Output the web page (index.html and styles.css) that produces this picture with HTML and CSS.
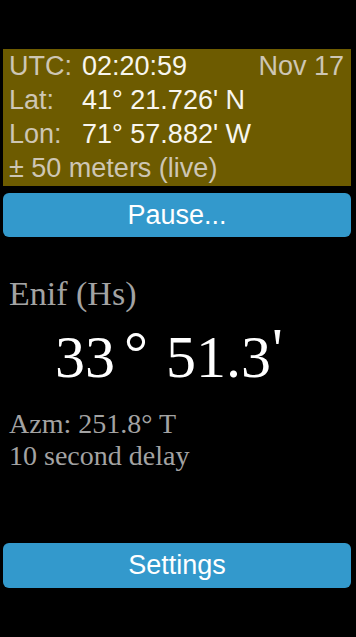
FILE: index.html
```html
<!DOCTYPE html>
<html lang="en">

<head>
    <meta charset="UTF-8">
    <title>Sight</title>
    <link rel="stylesheet" href="styles.css">
</head>

<body>
    <div class="fix-box">
        <div class="fix-row">
            <span class="label">UTC:</span>
            <span class="value">02:20:59</span>
            <span class="date">Nov 17</span>
        </div>
        <div class="fix-row">
            <span class="label">Lat:</span>
            <span class="value">41° 21.726' N</span>
        </div>
        <div class="fix-row">
            <span class="label">Lon:</span>
            <span class="value">71° 57.882' W</span>
        </div>
        <div class="fix-row">
            <span class="accuracy">± 50 meters (live)</span>
        </div>
    </div>

    <button class="btn btn-pause">Pause...</button>

    <div class="sight">
        <p class="body-name">Enif (Hs)</p>
        <p class="altitude">33<span class="deg">°</span>51.3<span class="min">'</span></p>
        <p class="info">Azm: 251.8° T</p>
        <p class="info">10 second delay</p>
    </div>

    <button class="btn btn-settings">Settings</button>
</body>

</html>
```

FILE: styles.css
```css
/* Basic page styles */
body {
    margin: 0;
    padding: 49px 5px 0 3px;
    background-color: #000;
    font-family: "Liberation Sans", Arial, sans-serif;
}

p {
    margin: 0;
}

/* GPS fix box */
.fix-box {
    background-color: #6d5b00;
    padding: 0 7px 1px 6px;
    font-size: 27px;
    line-height: 34px;
}

.fix-row {
    display: flex;
    white-space: nowrap;
}

.label {
    width: 73px;
    color: #cdc6b4;
}

.value {
    color: #f8f6ee;
}

.date {
    margin-left: auto;
    color: #cdc6b4;
}

.accuracy {
    color: #cdc6b4;
}

/* Buttons */
.btn {
    display: block;
    width: 100%;
    border: none;
    border-radius: 6px;
    background-color: #3399cc;
    color: #fff;
    font-family: "Liberation Sans", Arial, sans-serif;
    font-size: 27px;
    padding: 0;
}

.btn-pause {
    margin-top: 7px;
    height: 44px;
}

.btn-settings {
    margin-top: 71px;
    height: 45px;
}

/* Sight readout */
.sight {
    font-family: "Liberation Serif", "Times New Roman", serif;
    padding-left: 6px;
}

.body-name {
    margin-top: 37px;
    font-size: 34px;
    line-height: 40px;
    color: #a3a3a3;
}

.altitude {
    margin-top: 8px;
    padding-left: 46px;
    font-size: 60px;
    line-height: 70px;
    color: #fff;
}

.altitude .deg {
    margin: 0 18px 0 9px;
    line-height: 0;
    vertical-align: 4px;
}

.altitude .min {
    margin-left: 1px;
    line-height: 0;
    vertical-align: 8px;
}

.info {
    font-size: 28px;
    line-height: 32px;
    color: #a3a3a3;
}

.altitude + .info {
    margin-top: 16px;
}
```
